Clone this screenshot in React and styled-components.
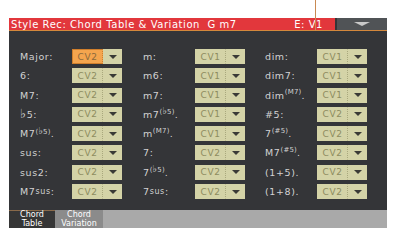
import styled, { createGlobalStyle } from 'styled-components';

const GlobalStyle = createGlobalStyle`
  html, body {
    margin: 0;
    background: #ffffff;
  }
`;

const Page = styled.div`
  position: relative;
  padding: 18px 0 12px 9px;
  font-family: 'DejaVu Sans', 'Liberation Sans', sans-serif;
`;

const Marker = styled.div`
  position: absolute;
  left: 315px;
  top: 0;
  width: 1px;
  height: 31px;
  background: #c98a52;
`;

const Screen = styled.div`
  width: 378px;
  height: 210px;
  background: #343538;
  display: flex;
  flex-direction: column;
`;

const TitleBar = styled.header`
  display: flex;
  height: 12px;
  border-bottom: 1px solid #d4883c;
  gap: 2px;
`;

const Title = styled.div`
  flex: 1;
  display: flex;
  align-items: center;
  background: #e2373c;
  color: #ffffff;
  font-size: 10px;
  letter-spacing: 0.55px;
  padding: 0 12px 0 2px;
  white-space: pre;
`;

const Status = styled.span`
  margin-left: auto;
`;

const MenuButton = styled.button`
  width: 50px;
  padding: 0;
  border: none;
  background: #505356;
  display: flex;
  align-items: center;
  justify-content: center;

  &::after {
    content: '';
    border-left: 8px solid transparent;
    border-right: 8px solid transparent;
    border-top: 4px solid #c9c9c9;
  }
`;

const Body = styled.section`
  flex: 1;
  padding: 18px 0 0 11px;
  display: grid;
  grid-template-columns: 52px 71px 52px 70px 52px 50px;
  grid-template-rows: repeat(8, 15px);
  row-gap: 4.3px;
  align-content: start;
`;

const Label = styled.div`
  color: #d2d2d2;
  font-size: 9.5px;
  letter-spacing: 0.6px;
  display: flex;
  align-items: center;
  white-space: nowrap;
`;

const Sup = styled.span`
  font-size: 7px;
  letter-spacing: 0.2px;
  position: relative;
  top: -3px;
`;

const Small = styled.span`
  font-size: 8px;
`;

const Flat = styled.span`
  font-size: 1.35em;
  line-height: 1;
`;

const Select = styled.div`
  width: 50px;
  height: 15px;
  display: flex;
  background: #d4d3a7;
`;

const Value = styled.div`
  width: 31px;
  box-sizing: border-box;
  display: flex;
  align-items: center;
  justify-content: center;
  font-size: 9px;
  letter-spacing: 0.6px;
  color: ${(p) => (p.$active ? '#8c6a3c' : '#8d8c5f')};
  background: ${(p) => (p.$active ? '#f4a54e' : 'transparent')};
  border: 1px solid ${(p) => (p.$active ? '#d07f2c' : 'transparent')};
  border-right: 1px dotted ${(p) => (p.$active ? '#d07f2c' : '#a9a87d')};
`;

const Arrow = styled.div`
  flex: 1;
  display: flex;
  align-items: center;
  justify-content: center;

  &::after {
    content: '';
    border-left: 4px solid transparent;
    border-right: 4px solid transparent;
    border-top: 4px solid #3a3a36;
  }
`;

const TabBar = styled.nav`
  height: 18px;
  display: flex;
  background: #a9a9a9;
`;

const Tab = styled.div`
  width: ${(p) => (p.$active ? '46px' : '48px')};
  box-sizing: border-box;
  display: flex;
  flex-direction: column;
  align-items: center;
  justify-content: center;
  font-size: 8px;
  line-height: 8.5px;
  color: #ffffff;
  background: ${(p) => (p.$active ? '#363636' : '#8b8b8b')};
  border-top: 1px solid ${(p) => (p.$active ? '#8a6a4a' : '#8b8b8b')};
`;

const b = <Flat>♭</Flat>;

const l = (base, sup, tail = ':') => (
  <>
    {base}
    {sup && <Sup>{sup}</Sup>}
    {tail}
  </>
);

const rows = [
  [l('Major'), 'CV2', l('m'), 'CV1', l('dim'), 'CV1'],
  [l('6'), 'CV2', l('m6'), 'CV1', l('dim7'), 'CV1'],
  [l('M7'), 'CV2', l('m7'), 'CV1', l('dim', '(M7)', '.'), 'CV1'],
  [l(<>{b}5</>), 'CV2', l('m7', <>({b}5)</>, '.'), 'CV1', l('#5'), 'CV2'],
  [l('M7', <>({b}5)</>, '.'), 'CV2', l('m', '(M7)', '.'), 'CV1', l('7', '(#5)', '.'), 'CV2'],
  [l('sus'), 'CV2', l('7'), 'CV2', l('M7', '(#5)', '.'), 'CV2'],
  [l('sus2'), 'CV2', l('7', <>({b}5)</>, '.'), 'CV2', <>(1+5).</>, 'CV2'],
  [<>M7<Small>sus</Small>:</>, 'CV2', <>7<Small>sus</Small>:</>, 'CV2', <>(1+8).</>, 'CV2'],
];

function Dropdown({ value, active }) {
  return (
    <Select>
      <Value $active={active}>{value}</Value>
      <Arrow />
    </Select>
  );
}

export default function App() {
  return (
    <Page>
      <GlobalStyle />
      <Screen>
        <TitleBar>
          <Title>
            Style Rec: Chord Table &amp; Variation  G m7
            <Status>E: V1</Status>
          </Title>
          <MenuButton aria-label="Menu" />
        </TitleBar>
        <Body>
          {rows.map((row, r) =>
            row.map((cell, c) =>
              c % 2 === 0 ? (
                <Label key={`${r}-${c}`}>{cell}</Label>
              ) : (
                <div key={`${r}-${c}`}>
                  <Dropdown value={cell} active={r === 0 && c === 1} />
                </div>
              )
            )
          )}
        </Body>
        <TabBar>
          <Tab $active>
            <span>Chord</span>
            <span>Table</span>
          </Tab>
          <Tab>
            <span>Chord</span>
            <span>Variation</span>
          </Tab>
        </TabBar>
      </Screen>
      <Marker />
    </Page>
  );
}
